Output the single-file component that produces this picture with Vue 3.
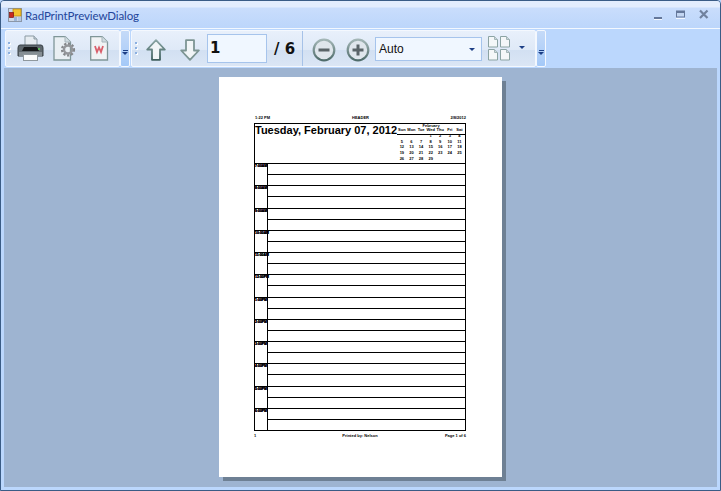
<script setup>
const hours = ['7:00AM', '8:00AM', '9:00AM', '10:00AM', '11:00AM', '12:00PM', '1:00PM', '2:00PM', '3:00PM', '4:00PM', '5:00PM', '6:00PM']
const dayNames = ['Sun', 'Mon', 'Tue', 'Wed', 'Thu', 'Fri', 'Sat']
const dates = ['', '', '', 1, 2, 3, 4, 5, 6, 7, 8, 9, 10, 11, 12, 13, 14, 15, 16, 17, 18, 19, 20, 21, 22, 23, 24, 25, 26, 27, 28, 29]
</script>

<template>
  <div class="window">
    <header class="titlebar">
      <svg class="app-icon" width="14" height="14" viewBox="0 0 14 14">
        <rect x="0.5" y="0.5" width="13" height="13" fill="#cfd9e8" stroke="#8b97a8" />
        <rect x="5" y="1" width="8" height="7" fill="#f4c430" stroke="#b8860b" stroke-width="0.7" />
        <rect x="1.5" y="4.5" width="4" height="5" fill="#c82a20" stroke="#801510" stroke-width="0.7" />
        <rect x="6" y="9" width="3" height="4" fill="#9db6d8" />
        <rect x="10" y="9" width="3" height="4" fill="#b6c8e2" />
      </svg>
      <span class="title">RadPrintPreviewDialog</span>
      <div class="win-buttons">
        <svg width="8" height="12" viewBox="0 0 8 12"><rect y="8" width="8" height="2" fill="#64779a" /><rect y="10" width="8" height="1" fill="#f2f7ff" /></svg>
        <svg width="9" height="12" viewBox="0 0 9 12"><rect x="0.5" y="2" width="8" height="6" fill="#c3d6f2" stroke="#64779a" /><rect x="0" y="2" width="9" height="2" fill="#64779a" /><rect y="9" width="9" height="1" fill="#f2f7ff" /></svg>
        <svg width="10" height="12" viewBox="0 0 10 12"><path d="M1 1.500 L8.500 9 M8.500 1.500 L1 9" stroke="#71829e" stroke-width="2.200" /></svg>
      </div>
    </header>

    <nav class="toolbar">
      <div class="strip strip-a">
        <span class="grip"><i></i><i></i><i></i></span>
        <svg class="ic-print" width="27" height="27" viewBox="0 0 27 27">
          <path d="M8 1 H17 L20 4 V11 H8 Z" fill="#e6ecf1" stroke="#8b9aa3" />
          <path d="M17 1 V4 H20" fill="#c4d0da" stroke="#8b9aa3" />
          <path d="M3 10 H24 Q26 10 26 13 V21 H1 V13 Q1 10 3 10 Z" fill="#5f686e" stroke="#3a4248" />
          <path d="M7 12 H20 L22 16 H5 Z" fill="#16191b" />
          <rect x="2" y="17" width="23" height="4" fill="#858e94" />
          <circle cx="22" cy="14" r="1" fill="#5fd05a" />
          <rect x="6.500" y="19.500" width="14" height="6" fill="#fafbfc" stroke="#8f989e" />
        </svg>
        <svg class="ic-set" width="23" height="25" viewBox="0 0 23 25">
          <path d="M1 0.500 H12 L17.500 6 V24 H1 Z" fill="#e9eff3" stroke="#7f9698" stroke-width="1.300" />
          <path d="M12 0.500 V6 H17.500" fill="#d0dbe1" stroke="#a6b4ba" />
          <circle cx="15" cy="13.500" r="5.800" fill="none" stroke="#85878a" stroke-width="2.600" stroke-dasharray="2.200 1.600" />
          <circle cx="15" cy="13.500" r="4" fill="none" stroke="#94969a" stroke-width="2.400" />
        </svg>
        <svg class="ic-w" width="19" height="25" viewBox="0 0 19 25">
          <path d="M0.700 0.500 H12 L17.500 6 V24 H0.700 Z" fill="#f0f3f5" stroke="#7f9698" stroke-width="1.300" />
          <path d="M12 0.500 V6 H17.500" fill="#d0dbe1" stroke="#a6b4ba" />
          <path d="M5 10 L7 16 L9 11.500 L11 16 L13 10" fill="none" stroke="#d9606c" stroke-width="1.800" />
        </svg>
      </div>
      <button class="overflow"><span class="dash"></span><span class="tri"></span></button>

      <div class="strip strip-b">
        <span class="grip"><i></i><i></i><i></i></span>
        <svg class="ic-up" width="20" height="22" viewBox="0 0 20 22">
          <defs>
            <linearGradient id="arrowUp" x1="0" y1="0" x2="0" y2="1">
              <stop offset="0" stop-color="#8aa5a4" /><stop offset="1" stop-color="#3f5f5e" />
            </linearGradient>
          </defs>
          <path d="M10 1.200 L18.800 10.500 H14 V20.800 H6 V10.500 H1.200 Z" fill="#f1f5f7" stroke="url(#arrowUp)" stroke-width="1.800" stroke-linejoin="round" />
        </svg>
        <svg class="ic-down" width="20" height="22" viewBox="0 0 20 22">
          <path d="M10 20.800 L18.800 11.500 H14 V1.200 H6 V11.500 H1.200 Z" fill="#f1f5f7" stroke="#7d9593" stroke-width="1.800" stroke-linejoin="round" />
        </svg>
        <div class="pagebox">1</div>
        <span class="total">/ 6</span>
        <span class="sep"></span>
        <svg class="ic-zoom" width="24" height="24" viewBox="0 0 24 24">
          <defs>
            <linearGradient id="ring" x1="0" y1="0" x2="0" y2="1">
              <stop offset="0" stop-color="#a3b6b6" /><stop offset="1" stop-color="#4f6c6b" />
            </linearGradient>
          </defs>
          <circle cx="12" cy="12" r="10.300" fill="#dfe6ec" stroke="url(#ring)" stroke-width="2.200" />
          <rect x="6.500" y="10.500" width="11" height="3" fill="#5a6468" />
        </svg>
        <svg class="ic-zoom plus" width="24" height="24" viewBox="0 0 24 24">
          <circle cx="12" cy="12" r="10.300" fill="#dfe6ec" stroke="url(#ring)" stroke-width="2.200" />
          <rect x="6.500" y="10.500" width="11" height="3" fill="#5a6468" />
          <rect x="10.500" y="6.500" width="3" height="11" fill="#5a6468" />
        </svg>
        <div class="combo">
          <span>Auto</span>
          <span class="tri"></span>
        </div>
        <div class="pages">
          <svg v-for="n in 4" :key="n" width="11" height="12" viewBox="0 0 11 12">
            <path d="M0.500 0.500 H6.500 L9.500 3.500 V11 H0.500 Z" fill="#f4f7f8" stroke="#8ba3a3" />
            <path d="M6.500 0.500 V3.500 H9.500" fill="#ccd8dc" stroke="#a4b6b8" />
          </svg>
        </div>
        <span class="tri page-tri"></span>
      </div>
      <button class="overflow"><span class="dash"></span><span class="tri"></span></button>
    </nav>

    <main class="canvas">
      <article class="page">
        <div class="meta">
          <span>1:22 PM</span><span>HEADER</span><span class="end">2/8/2012</span>
        </div>
        <div class="sheet">
          <div class="day-head">
            <h1>Tuesday, February 07, 2012</h1>
            <div class="cal">
              <div class="month">February</div>
              <div class="cal-names">
                <span v-for="d in dayNames" :key="d">{{ d }}</span>
              </div>
              <div class="cal-days">
                <span v-for="(d, i) in dates" :key="i">{{ d }}</span>
              </div>
            </div>
          </div>
          <div v-for="h in hours" :key="h" class="hour">
            <div class="time">{{ h }}</div>
            <div class="slots"><div></div><div></div></div>
          </div>
        </div>
        <div class="meta foot">
          <span>1</span><span>Printed by: Nelson</span><span class="end">Page 1 of 6</span>
        </div>
      </article>
    </main>
  </div>
</template>

<style>
html, body { margin: 0; padding: 0; background: #bbd7fd; overflow: hidden; }
</style>

<style scoped>
.window {
  box-sizing: border-box;
  width: 721px;
  height: 491px;
  display: flex;
  flex-direction: column;
  background: #bbd7fd;
  border: 1px solid #3a5c86;
  border-radius: 4px 4px 0 0;
  overflow: hidden;
  font-family: "Liberation Sans", Arial, sans-serif;
}
.titlebar {
  box-sizing: border-box;
  height: 27px;
  flex: none;
  display: flex;
  align-items: flex-start;
  padding: 7px 0 0 7px;
  background: linear-gradient(#e3edfd 0, #e3edfd 6px, #c9ddfc 7px, #bcd6fb 100%);
}
.app-icon { flex: none; margin-right: 3px; }
.title {
  font-family: Lato, sans-serif;
  font-size: 11.5px;
  letter-spacing: -0.1px;
  line-height: 16px;
  color: #23459a;
}
.win-buttons {
  margin-left: auto;
  margin-right: 11px;
  margin-top: 1px;
  display: flex;
  gap: 14px;
}
.win-buttons svg { display: block; }
.toolbar {
  box-sizing: border-box;
  flex: none;
  height: 40px;
  display: flex;
  padding: 1px 0 1px 4px;
  border-top: 1px solid #f3f8ff;
  background: #bbd7fd;
}
.strip {
  box-sizing: border-box;
  height: 37px;
  display: flex;
  align-items: center;
  position: relative;
  border: 1px solid #f4f8fe;
  border-radius: 2px;
  background: linear-gradient(#e8f0fb 0, #dfe9f7 19px, #d2e0f2 19px, #dbe6f5 100%);
}
.strip-a { width: 115px; padding-left: 2px; }
.strip-b { width: 405px; margin-left: 1px; padding-left: 3px; }
.grip { flex: none; width: 3px; display: flex; flex-direction: column; gap: 3px; margin-top: -1px; }
.grip i { display: block; width: 2px; height: 2px; background: #8cb0e0; box-shadow: 1px 1px 0 #fff; }
.ic-print { flex: none; margin-left: 6px; }
.ic-set { flex: none; margin-left: 9px; }
.ic-w { flex: none; margin-left: 14px; }
.ic-up { flex: none; margin-left: 8px; margin-top: 2px; }
.ic-down { flex: none; margin-left: 14px; margin-top: 2px; }
.pagebox {
  flex: none;
  box-sizing: border-box;
  width: 60px;
  height: 29px;
  margin-left: 7px;
  padding-left: 2px;
  background: #f0f7ff;
  border: 1px solid #a6c4ec;
  font: bold 15px/27px "DejaVu Sans", sans-serif;
  color: #111;
}
.total {
  flex: none;
  width: 35px;
  padding-left: 7px;
  box-sizing: border-box;
  font: bold 15px "DejaVu Sans", sans-serif;
  color: #111;
  white-space: pre;
}
.sep { flex: none; width: 1px; height: 35px; background: #a6c2e8; }
.ic-zoom { flex: none; margin-left: 9px; margin-top: 2px; }
.ic-zoom.plus { margin-left: 10px; }
.combo {
  flex: none;
  box-sizing: border-box;
  width: 107px;
  height: 24px;
  margin-left: 5px;
  padding: 0 6px 0 3px;
  display: flex;
  align-items: center;
  justify-content: space-between;
  background: #f0f7ff;
  border: 1px solid #a6c4ec;
  font-size: 12px;
  color: #111;
}
.tri {
  display: block;
  width: 0;
  height: 0;
  border-left: 3px solid transparent;
  border-right: 3px solid transparent;
  border-top: 3px solid #1d3f86;
}
.combo .tri { margin-top: 2px; }
.pages {
  flex: none;
  width: 24px;
  margin-left: 6px;
  display: grid;
  grid-template-columns: 11px 11px;
  gap: 1px 1px;
}
.pages svg { display: block; }
.page-tri { flex: none; margin-left: 7px; margin-top: -3px; }
.overflow {
  flex: none;
  box-sizing: border-box;
  width: 10px;
  height: 37px;
  margin-left: 0;
  padding: 19px 0 0;
  display: flex;
  flex-direction: column;
  align-items: center;
  gap: 1px;
  border: 1px solid #f4f8fe;
  border-radius: 2px;
  background: linear-gradient(#c5daf8, #a4c9f8);
}
.dash { display: block; width: 5px; height: 1px; background: #1d3f86; }
.canvas {
  flex: 1;
  min-height: 0;
  margin: 0 3px 3px;
  padding-top: 9px;
  display: flex;
  justify-content: center;
  background: #9eb4d1;
}
.page {
  box-sizing: border-box;
  width: 283px;
  height: 400px;
  padding: 37px 36px 0 35px;
  background: #fff;
  box-shadow: 4px 4px 0 #6e8094;
  color: #000;
}
.meta {
  height: 9px;
  display: grid;
  grid-template-columns: 1fr auto 1fr;
  font-size: 4px;
  font-weight: bold;
  line-height: 7px;
  padding: 0 0 0 1px;
}
.end { text-align: right; }
.foot { margin-top: 1px; line-height: 7px; height: 7px; padding: 0; }
.sheet {
  box-sizing: border-box;
  width: 212px;
  border: 1px solid #000;
}
.day-head {
  box-sizing: border-box;
  height: 39px;
  display: flex;
  justify-content: space-between;
}
h1 {
  margin: 0;
  font-size: 11px;
  line-height: 12px;
  font-weight: bold;
  white-space: nowrap;
}
.cal {
  flex: none;
  width: 68px;
  height: 39px;
  font-size: 4px;
  font-weight: bold;
  text-align: center;
  line-height: 5px;
}
.month { height: 3px; line-height: 4px; }
.cal-names {
  display: grid;
  grid-template-columns: repeat(7, 9.6px);
  height: 7px;
  border-bottom: 1px solid #000;
  line-height: 6px;
}
.cal-days {
  display: grid;
  grid-template-columns: repeat(7, 9.6px);
  grid-auto-rows: 5.7px;
  margin-top: -2px;
}
.hour {
  display: flex;
  height: 22.25px;
  box-sizing: border-box;
  border-top: 1px solid #000;
}
.time {
  flex: none;
  box-sizing: border-box;
  width: 13px;
  border-right: 1px solid #000;
  font-size: 3.4px;
  font-weight: bold;
  line-height: 4px;
  text-align: center;
  white-space: nowrap;
  text-shadow: 0 0 0.6px #000, 0 0 0.6px #000;
}
.slots { flex: 1; display: flex; flex-direction: column; }
.slots div { flex: 1; }
.slots div + div { border-top: 1px solid #000; }
</style>
